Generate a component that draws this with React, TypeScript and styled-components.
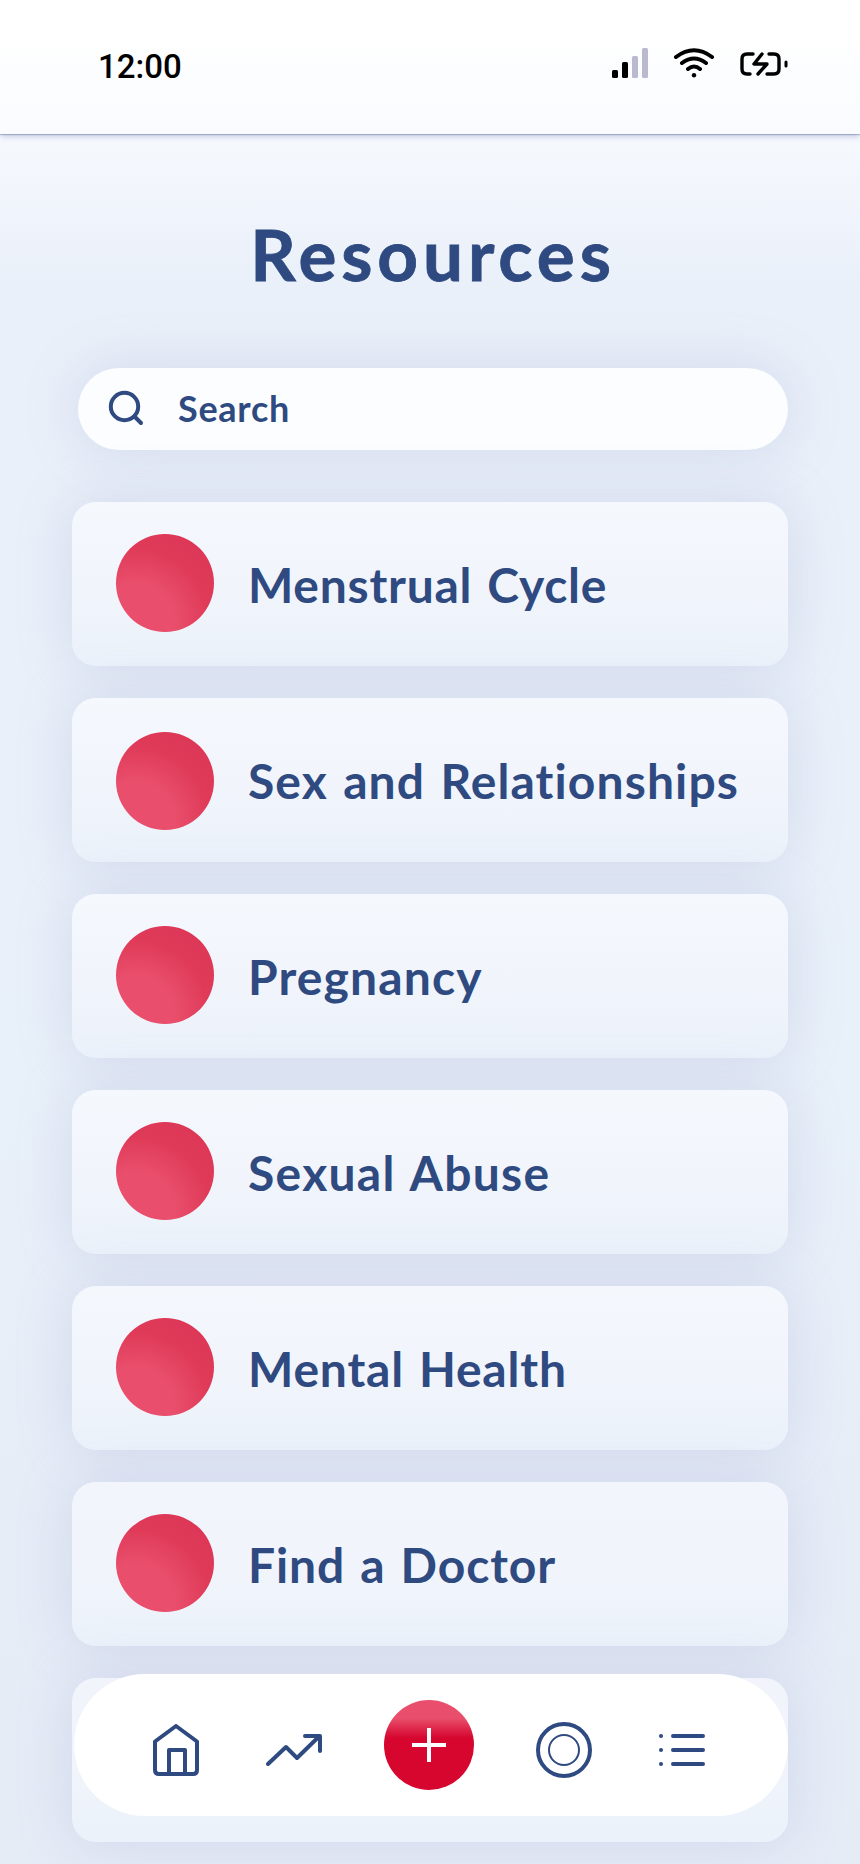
import React from 'react';
import styled, { createGlobalStyle } from 'styled-components';

const GlobalStyle = createGlobalStyle`
  * {
    box-sizing: border-box;
  }

  body {
    margin: 0;
    background: #e8eff8;
  }
`;

const navy = '#2e4a80';
const glow = '0 0 54px rgba(146, 150, 206, 0.26)';

const Screen = styled.div`
  width: 860px;
  height: 1864px;
  overflow: hidden;
  position: relative;
  display: flex;
  flex-direction: column;
  background: linear-gradient(180deg, #f5f8fd 0, #f5f8fd 150px, #eff3fb 225px, #e9f0f9 290px, #e8f0f9 1100px, #e6edf7 1500px, #e5ecf6 100%);
  color: ${navy};
  font-family: Lato, 'Open Sans', sans-serif;
  font-variant-ligatures: none;
`;

const StatusBar = styled.header`
  flex: none;
  height: 134px;
  padding: 0 71px 5px 98px;
  display: flex;
  align-items: center;
  justify-content: space-between;
  background: linear-gradient(180deg, #fff 20%, #f9fbfe 100%);
  box-shadow:
    0 1px 1px rgba(100, 105, 150, 0.4),
    0 3px 6px -1px rgba(120, 130, 190, 0.45);
`;

const Clock = styled.time`
  margin-top: 4px;
  font: 500 33px/40px Roboto, sans-serif;
  color: #000;
`;

const StatusIcons = styled.div`
  display: flex;
  align-items: center;
  margin-top: -1px;
`;

const Title = styled.h1`
  flex: none;
  margin: 75px 0 0;
  height: 92px;
  padding-left: 6px;
  text-align: center;
  font-size: 71px;
  font-weight: 700;
  line-height: 90px;
  letter-spacing: 4.9px;
  -webkit-text-stroke: 0.8px ${navy};
`;

const SearchBar = styled.label`
  flex: none;
  margin: 67px 72px 0 78px;
  height: 82px;
  padding: 0 30px;
  border-radius: 41px;
  display: flex;
  align-items: center;
  gap: 32px;
  background: #fcfdff;
  box-shadow: ${glow};
`;

const SearchText = styled.span`
  margin-top: -3px;
  font-size: 36px;
  font-weight: 700;
  letter-spacing: 0.7px;
`;

const List = styled.ul`
  list-style: none;
  margin: 52px 72px 0;
  padding: 0;
  display: flex;
  flex-direction: column;
  gap: 32px;
`;

const Item = styled.li<{ tone: string }>`
  position: relative;
  height: 164px;
  padding: 0 0 0 44px;
  border-radius: 24px;
  display: flex;
  align-items: flex-start;
  gap: 34px;
  background: linear-gradient(180deg, ${({ tone }) => tone} 0%, #f1f4fb 55%, #ebf2fa 100%);
  box-shadow: ${glow};
`;

const Dot = styled.span<{ top: number }>`
  flex: none;
  width: 98px;
  height: 98px;
  margin-top: ${({ top }) => top}px;
  border-radius: 50%;
  background: radial-gradient(circle at 20% 90%, #e94f6c 32%, #df3b59 62%, #dd3857 80%, #d82648 100%);
`;

const Label = styled.span<{ spacing: number }>`
  margin-top: 53px;
  font-size: 48px;
  font-weight: 700;
  line-height: 60px;
  letter-spacing: ${({ spacing }) => spacing}px;
  word-spacing: 2.5px;
  white-space: nowrap;
`;

const TabBar = styled.nav`
  position: absolute;
  left: 74px;
  top: 1674px;
  width: 714px;
  height: 142px;
  padding-left: 79px;
  border-radius: 71px;
  display: flex;
  align-items: center;
  gap: 62px;
  background: #fff;
`;

const TabButton = styled.button<{ shift?: number }>`
  flex: none;
  padding: 0;
  border: 0;
  margin: ${({ shift = 0 }) => shift}px 0 0;
  background: none;
  display: flex;
  color: ${navy};

  &:first-child {
    margin-right: 5px;
  }

  &:last-child {
    margin-left: 5px;
  }
`;

const AddButton = styled(TabButton)`
  width: 90px;
  height: 90px;
  border-radius: 50%;
  align-items: center;
  justify-content: center;
  background: linear-gradient(180deg, #e94f6c 0%, #e94f6c 20%, #d6062f 42%, #d6062f 100%);
`;

const items = [
  { name: 'Menstrual Cycle', dot: 32, spacing: 0.75, tone: '#f5f8fd' },
  { name: 'Sex and Relationships', dot: 34, spacing: 1.1, tone: '#f5f8fd' },
  { name: 'Pregnancy', dot: 32, spacing: 1.15, tone: '#f5f8fd' },
  { name: 'Sexual Abuse', dot: 32, spacing: 1.3, tone: '#f5f8fd' },
  { name: 'Mental Health', dot: 32, spacing: 0.8, tone: '#f4f7fc' },
  { name: 'Find a Doctor', dot: 32, spacing: 0.9, tone: '#f2f5fb' },
  { name: '', dot: 32, spacing: 0, tone: '#f1f4fb' },
];

const stroke = {
  fill: 'none',
  stroke: 'currentColor',
  strokeWidth: 4,
  strokeLinecap: 'round',
  strokeLinejoin: 'round',
} as const;

const StatusGlyphs = () => (
  <svg width="178" height="32" viewBox="0 0 178 32">
    <rect x="1" y="22" width="6" height="8" rx="1.5" />
    <rect x="11" y="14" width="6" height="16" rx="1.5" />
    <rect x="21" y="8" width="6" height="22" rx="1.5" fill="#b9bad0" />
    <rect x="31" y="0" width="6" height="30" rx="1.5" fill="#b9bad0" />
    <g fill="none" stroke="#000" strokeLinecap="round" strokeLinejoin="round">
      <path d="M65 9Q83-4.500 101 9M71 15Q83 6 95 15M77 21Q83 16 89 21" strokeWidth="4" />
      <path d="M142 6H136Q131 6 131 11V21Q131 26 136 26H139M158 6H163Q168 6 168 11V21Q168 26 163 26H156M151 6L143 16H156L147 26" strokeWidth="3.400" />
      <path d="M175 14V18" strokeWidth="3" />
    </g>
    <circle cx="83" cy="27.200" r="2.200" />
  </svg>
);

const SearchIcon = () => (
  <svg width="38" height="38" viewBox="0 0 38 38" {...stroke}>
    <circle cx="16.500" cy="16.500" r="13.700" />
    <path d="M26.500 26.500L33 33" />
  </svg>
);

const HomeIcon = () => (
  <svg width="46" height="52" viewBox="0 0 46 52" {...stroke}>
    <path d="M2 17.500L23 2L44 17.500V46Q44 50 40 50H6Q2 50 2 46ZM16 49V26H32V49" />
  </svg>
);

const TrendIcon = () => (
  <svg width="56" height="32" viewBox="0 0 56 32" {...stroke}>
    <path d="M2 30L20 13L31 24L53 2.500M39 2H54V17" />
  </svg>
);

const PlusIcon = () => (
  <svg width="34" height="34" viewBox="0 0 34 34" fill="none" stroke="#fff" strokeWidth="4">
    <path d="M17 0V34M0 17H34" />
  </svg>
);

const RingIcon = () => (
  <svg width="56" height="56" viewBox="0 0 56 56" {...stroke}>
    <circle cx="28" cy="28" r="26" />
    <circle cx="28" cy="28" r="15" strokeWidth="2" />
  </svg>
);

const ListIcon = () => (
  <svg width="46" height="32" viewBox="0 0 46 32" {...stroke}>
    <path d="M14 2H44M14 16H44M14 30H44M2 2H2.010M2 16H2.010M2 30H2.010" />
  </svg>
);

export default function App() {
  return (
    <>
      <GlobalStyle />
      <Screen>
        <StatusBar>
          <Clock>12:00</Clock>
          <StatusIcons>
            <StatusGlyphs />
          </StatusIcons>
        </StatusBar>
        <Title>Resources</Title>
        <SearchBar>
          <SearchIcon />
          <SearchText>Search</SearchText>
        </SearchBar>
        <List>
          {items.map(({ name, dot, spacing, tone }) => (
            <Item key={name} tone={tone}>
              {name && <Dot top={dot} />}
              {name && <Label spacing={spacing}>{name}</Label>}
            </Item>
          ))}
        </List>
        <TabBar>
          <TabButton aria-label="Home" shift={10}>
            <HomeIcon />
          </TabButton>
          <TabButton aria-label="Trends" shift={9}>
            <TrendIcon />
          </TabButton>
          <AddButton aria-label="Add">
            <PlusIcon />
          </AddButton>
          <TabButton aria-label="Cycle" shift={10}>
            <RingIcon />
          </TabButton>
          <TabButton aria-label="Menu" shift={10}>
            <ListIcon />
          </TabButton>
        </TabBar>
      </Screen>
    </>
  );
}
